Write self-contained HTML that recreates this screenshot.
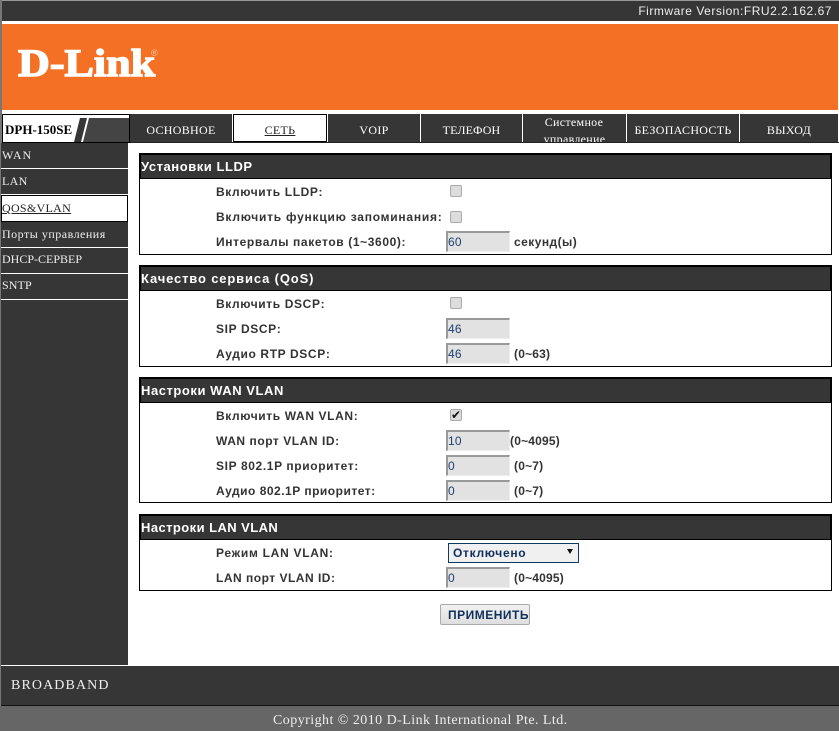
<!DOCTYPE html>
<html><head><meta charset="utf-8"><style>
html,body{margin:0;padding:0;background:#fff;width:839px;height:731px;overflow:hidden}
#p{position:relative;width:839px;height:731px;overflow:hidden;font-family:"Liberation Serif",serif}
.a{position:absolute;white-space:nowrap}
.d{position:absolute;background:#363636}
.tab{position:absolute;top:114px;height:28px;background:#363636;color:#fff;font:12px/32px "Liberation Serif",serif;text-align:center;overflow:hidden;letter-spacing:.3px}
.side{position:absolute;left:2px;color:#eee;font:12px/16px "Liberation Serif",serif;white-space:nowrap;letter-spacing:.3px}
.line{position:absolute;left:1px;width:127px;height:1px;background:#fff}
.sec{position:absolute;left:139px;width:691px;border:1px solid #000;background:#fff}
.hd{position:absolute;left:139px;width:689px;height:23px;background:#363636;border:solid #000;border-width:2px 2px 1px 2px;color:#fff;font:bold 13px/23px "Liberation Sans",sans-serif;letter-spacing:.55px}
.hd span{position:absolute;left:0;top:0}
.l{position:absolute;left:216px;color:#333;font:bold 12px/14px "Liberation Sans",sans-serif;letter-spacing:.62px;white-space:nowrap}
.u{position:absolute;color:#333;font:bold 12px/14px "Liberation Sans",sans-serif;letter-spacing:.2px;white-space:nowrap}
.i{position:absolute;left:446px;width:61px;height:18px;background:#e2e2e2;border-top:2px solid #999;border-left:2px solid #999;border-right:1px solid #eee;border-bottom:1px solid #eee;color:#1f3f6f;font:12px/19px "Liberation Sans",sans-serif;letter-spacing:.2px;box-sizing:content-box}
.c{position:absolute;left:450px;width:10px;height:10px;background:#dcdcdc;border:1px solid #aaa;border-radius:2px;color:#111;font:12px/10px "DejaVu Sans",sans-serif;text-align:center}
</style></head><body><div id="p">
<div class="a" style="left:0;top:0;width:839px;height:1px;background:#999"></div>
<div class="a" style="left:0;top:0;width:2px;height:731px;background:#777"></div>
<div class="d" style="left:2px;top:1px;width:837px;height:20px"></div>
<div class="a" style="right:7px;top:4px;color:#eee;font:12px/15px 'Liberation Sans',sans-serif;letter-spacing:.52px">Firmware Version:FRU2.2.162.67</div>
<div class="a" style="left:2px;top:24px;width:836px;height:86px;background:#f47024"></div>
<div class="a" style="left:18px;top:41px;color:#fff;font:bold 39px/46px 'Liberation Serif',serif;-webkit-text-stroke:1.4px #fff;transform:scaleX(1.13);transform-origin:0 0;letter-spacing:0">D-Link</div>
<div class="a" style="left:151px;top:48px;color:#f9c9a8;font:9px/10px 'Liberation Sans',sans-serif">®</div>

<div class="a" style="left:2px;top:114px;width:126px;height:27px;border:1px solid #000;background:#fff;overflow:hidden">
<svg width="126" height="27" style="position:absolute;left:0;top:0"><path d="M77 3H84L78 27H71Z" fill="#363636"/><path d="M86 3H126V27H80Z" fill="#444"/></svg>
<div class="a" style="left:2px;top:7px;color:#000;font:bold 13px/16px 'Liberation Serif',serif">DPH-150SE</div>
</div>

<div class="tab" style="left:130px;width:102px">ОСНОВНОЕ</div>
<div class="tab" style="left:233px;width:92px;height:26px;background:#fff;border:1px solid #000;color:#222;line-height:30px;text-decoration:underline">СЕТЬ</div>
<div class="tab" style="left:328px;width:92px">VOIP</div>
<div class="tab" style="left:421px;width:101px;letter-spacing:.1px">ТЕЛЕФОН</div>
<div class="tab" style="left:523px;width:103px;line-height:17px;text-indent:-1px">Системное<br>управление</div>
<div class="tab" style="left:627px;width:112px">БЕЗОПАСНОСТЬ</div>
<div class="tab" style="left:740px;width:98px">ВЫХОД</div>
<div class="a" style="left:130px;top:142px;width:709px;height:1px;background:#222"></div>

<div class="d" style="left:1px;top:143px;width:127px;height:522px"></div>
<div class="side" style="top:147px;letter-spacing:.9px">WAN</div>
<div class="line" style="top:168px"></div>
<div class="side" style="top:173px">LAN</div>
<div class="line" style="top:194px"></div>
<div class="a" style="left:1px;top:195px;width:125px;height:25px;background:#fff;border:1px solid #000"></div>
<div class="side" style="top:200px;color:#222;text-decoration:underline">QOS&amp;VLAN</div>
<div class="side" style="top:226px;letter-spacing:.5px">Порты управления</div>
<div class="line" style="top:247px"></div>
<div class="side" style="top:251px;letter-spacing:0">DHCP-СЕРВЕР</div>
<div class="line" style="top:273px"></div>
<div class="side" style="top:277px;letter-spacing:.1px">SNTP</div>
<div class="line" style="top:299px"></div>
<div class="a" style="left:1px;top:665px;width:127px;height:1px;background:#fff"></div>

<div class="sec" style="top:155px;height:98px"></div>
<div class="hd" style="top:153px"><span>Установки LLDP</span></div>
<div class="l" style="top:185px">Включить LLDP:</div><div class="c" style="top:185px"></div>
<div class="l" style="top:210px;letter-spacing:.76px">Включить функцию запоминания:</div><div class="c" style="top:211px"></div>
<div class="l" style="top:235px">Интервалы пакетов (1~3600):</div><div class="i" style="top:231px">60</div><div class="u" style="left:514px;top:235px;letter-spacing:.45px">секунд(ы)</div>

<div class="sec" style="top:267px;height:98px"></div>
<div class="hd" style="top:265px"><span style="letter-spacing:.85px">Качество сервиса (QoS)</span></div>
<div class="l" style="top:297px">Включить DSCP:</div><div class="c" style="top:297px"></div>
<div class="l" style="top:322px">SIP DSCP:</div><div class="i" style="top:318px">46</div>
<div class="l" style="top:347px">Аудио RTP DSCP:</div><div class="i" style="top:343px">46</div><div class="u" style="left:514px;top:347px">(0~63)</div>

<div class="sec" style="top:379px;height:122px"></div>
<div class="hd" style="top:377px"><span>Настроки WAN VLAN</span></div>
<div class="l" style="top:409px">Включить WAN VLAN:</div><div class="c" style="top:409px">✔</div>
<div class="l" style="top:434px;letter-spacing:.55px">WAN порт VLAN ID:</div><div class="i" style="top:430px">10</div><div class="u" style="left:510px;top:434px">(0~4095)</div>
<div class="l" style="top:459px">SIP 802.1P приоритет:</div><div class="i" style="top:455px">0</div><div class="u" style="left:514px;top:459px">(0~7)</div>
<div class="l" style="top:484px;letter-spacing:.5px">Аудио 802.1P приоритет:</div><div class="i" style="top:480px">0</div><div class="u" style="left:514px;top:484px">(0~7)</div>

<div class="sec" style="top:516px;height:73px"></div>
<div class="hd" style="top:514px"><span style="letter-spacing:.43px">Настроки LAN VLAN</span></div>
<div class="l" style="top:546px;letter-spacing:.72px">Режим LAN VLAN:</div>
<div class="a" style="left:448px;top:543px;width:129px;height:18px;background:#f0f0f0;border:1px solid #0f3a62;color:#0f3060;font:bold 12px/19px 'Liberation Sans',sans-serif;letter-spacing:.7px;text-indent:4px">Отключено<svg width="6" height="5" style="position:absolute;left:118px;top:5px"><path d="M0 0H6L3 5Z" fill="#111"/></svg></div>
<div class="l" style="top:571px;letter-spacing:.5px">LAN порт VLAN ID:</div><div class="i" style="top:567px">0</div><div class="u" style="left:514px;top:571px">(0~4095)</div>

<div class="a" style="left:440px;top:604px;width:88px;height:19px;background:linear-gradient(#f2f2f2,#dedede);border:1px solid #aaa;border-radius:2px;color:#0f2f5a;font:bold 12px/20px 'Liberation Sans',sans-serif;letter-spacing:.5px;text-indent:7px">ПРИМЕНИТЬ</div>

<div class="d" style="left:1px;top:666px;width:838px;height:39px"></div>
<div class="a" style="left:1px;top:705px;width:838px;height:1px;background:#111"></div>
<div class="a" style="left:11px;top:677px;color:#eee;font:14px/18px 'Liberation Serif',serif;letter-spacing:1.1px">BROADBAND</div>
<div class="a" style="left:0;top:706px;width:839px;height:25px;background:#666"></div>
<div class="a" style="left:273px;top:712px;color:#eee;font:14px/18px 'Liberation Serif',serif;letter-spacing:.45px">Copyright © 2010 D-Link International Pte. Ltd.</div>
</div></body></html>
